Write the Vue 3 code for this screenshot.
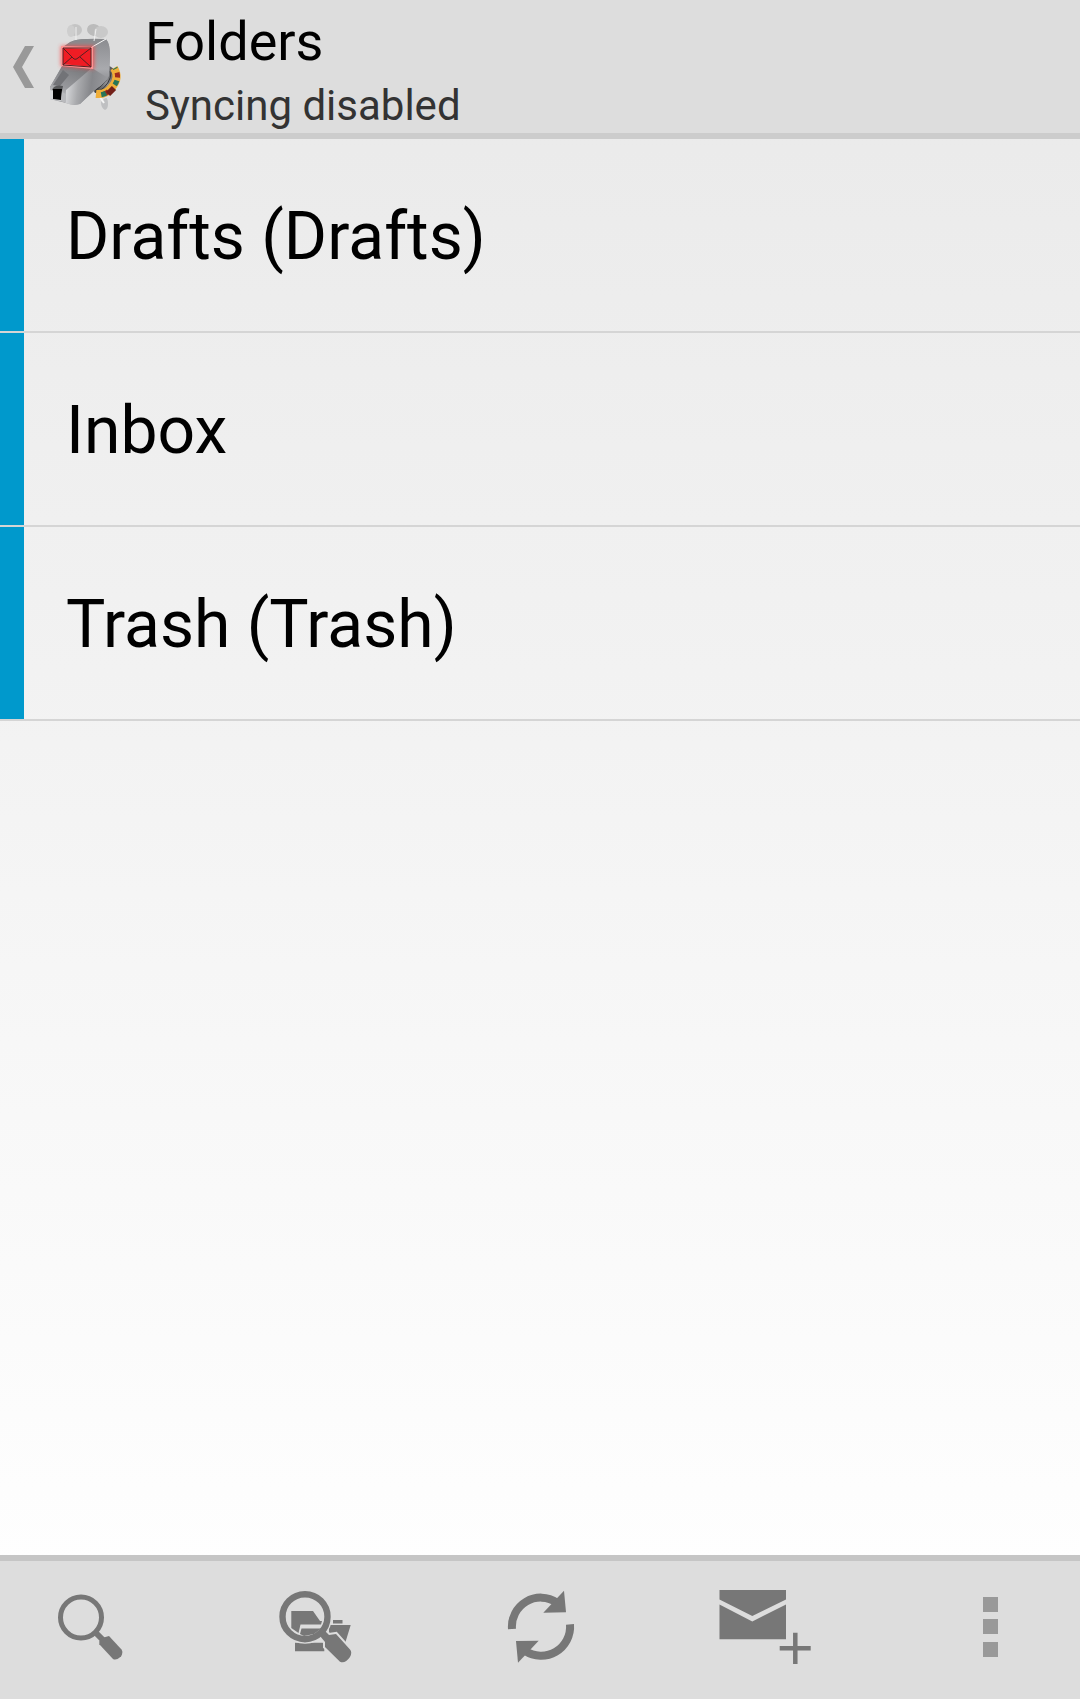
<script setup>
const folders = ['Drafts (Drafts)', 'Inbox', 'Trash (Trash)']
</script>

<template>
  <div class="screen">
    <header class="bar">
      <button class="up" type="button" aria-label="Back">
        <svg class="chevron" viewBox="0 0 22 42" aria-hidden="true">
          <path d="M0 21L12 0H21L9 21L21 42H12Z" fill="#999" />
        </svg>
        <svg class="logo" viewBox="0 2 90 100" aria-hidden="true">
          <defs>
            <linearGradient id="head" x1="0" y1="0" x2="1" y2="0.6">
              <stop offset="0" stop-color="#77787b" />
              <stop offset="0.5" stop-color="#8d8e92" />
              <stop offset="1" stop-color="#a0a1a5" />
            </linearGradient>
            <linearGradient id="side" x1="0" y1="0" x2="0" y2="1">
              <stop offset="0" stop-color="#8b8c90" />
              <stop offset="0.6" stop-color="#a9aaae" />
              <stop offset="1" stop-color="#7d7e82" />
            </linearGradient>
            <linearGradient id="snout" x1="0.7" y1="0" x2="0.2" y2="1">
              <stop offset="0" stop-color="#77787b" />
              <stop offset="0.6" stop-color="#97989c" />
              <stop offset="1" stop-color="#d4d5d7" />
            </linearGradient>
            <linearGradient id="cheek" x1="0" y1="0.5" x2="1" y2="0.6">
              <stop offset="0" stop-color="#dcdddf" />
              <stop offset="0.3" stop-color="#a9aaad" />
              <stop offset="0.6" stop-color="#86878b" />
              <stop offset="1" stop-color="#9a9b9f" />
            </linearGradient>
            <linearGradient id="neck" x1="0" y1="1" x2="1" y2="0">
              <stop offset="0" stop-color="#2c2d2f" />
              <stop offset="0.5" stop-color="#8f9094" />
              <stop offset="1" stop-color="#47484a" />
            </linearGradient>
            <filter id="glow" x="-30%" y="-40%" width="160%" height="180%">
              <feGaussianBlur stdDeviation="2" />
            </filter>
          </defs>
          <path d="M62 86Q68 79 68 89Q68 94 65 95Q61 93 61 87Z" fill="#bfc0c2" />
          <path d="M60 82L64 88" stroke="#f5f5f5" stroke-width="2" />
          <path d="M68 50L74 54Q76 68 65 76L55 78L52 72Z" fill="url(#neck)" />
          <path d="M69 56Q69 66 56 75M71 57Q71 69 58 77" fill="none" stroke="#37383a" />
          <path d="M74 53Q80 63 72 72Q66 80 56 79" fill="none" stroke="#f0ae38" stroke-width="8" />
          <path d="M75 53Q81 63 73 72Q66 81 56 80" fill="none" stroke="#a02c1e" stroke-width="5" stroke-dasharray="5 17" stroke-dashoffset="-5" />
          <path d="M75 53Q81 63 73 72Q66 81 56 80" fill="none" stroke="#277658" stroke-width="5" stroke-dasharray="5 12" stroke-dashoffset="-13" />
          <path d="M68 79L74 73" stroke="#732019" stroke-width="6" />
          <path d="M30 27Q36 24 46 24L65 24Q70 27 70 40L69 61Q66 67 57 73L40 89Q33 91 26 88L10 84L10 72L22 52L23 32Z" fill="url(#head)" />
          <path d="M52 32L66 24Q70 28 70 42L69 61Q64 69 55 74L50 54Z" fill="url(#side)" />
          <path d="M22 51L52 53L26 75L25 87L10 84L10 72Z" fill="url(#snout)" />
          <path d="M52 53L68 63Q64 69 56 74L40 89Q33 91 25 88L26 75Z" fill="url(#cheek)" />
          <path d="M23 55L29 60L20 71L13 70Z" fill="#727377" />
          <path d="M12 75Q14 69 23 71L22 76Z" fill="#57585a" />
          <path d="M13 74H22L21 85L13 84Z" fill="#000" />
          <path d="M10 75L13 76V84L10 83Z" fill="#d6d7d8" />
          <path d="M22 77L26 79V88L21 86Z" fill="#b9babd" />
          <path d="M23 33L33 26Q42 23 65 24L52 32Z" fill="#898a8d" />
          <path d="M52 32L66 24" stroke="#f7f7f7" />
          <path d="M21 31H54V54L21 51Z" fill="#ff4545" opacity="0.85" filter="url(#glow)" />
          <path d="M22 32L52 33V53L22 50Z" fill="#ef1c24" stroke="#ff9494" stroke-width="2" />
          <path d="M23 33H51V52L23 50ZM23 33L34 44Q36 45 38 43L51 33M23 50L32 42M51 52L40 42" fill="none" stroke="#552022" stroke-width="1" />
          <ellipse cx="35" cy="15" rx="7" ry="6" fill="#c4c4c4" />
          <ellipse cx="31" cy="16" rx="4" ry="6" fill="#cecece" />
          <ellipse cx="54" cy="15" rx="7" ry="6" fill="#bbb" transform="rotate(12 54 15)" />
          <ellipse cx="61" cy="17" rx="7" ry="6" fill="#c9c9c9" />
          <path d="M36 12V25M56 14L54 26" stroke="#f0f0f0" fill="none" />
        </svg>
      </button>
      <div class="titles">
        <h1>Folders</h1>
        <p>Syncing disabled</p>
      </div>
    </header>

    <main>
      <ul class="list">
        <li v-for="name in folders" :key="name">
          <a class="row" href="#">{{ name }}</a>
        </li>
      </ul>
    </main>

    <footer class="actions">
      <button type="button" aria-label="Search">
        <svg viewBox="0 0 96 96" aria-hidden="true">
          <circle cx="39" cy="35.5" r="20.5" fill="none" stroke="#777" stroke-width="5" />
          <path d="M53 50L62 59" stroke="#777" stroke-width="6" />
          <path d="M57.3 62.3V59L60 56L67 54L79.5 67.5Q81.5 70 79 74.5Q74 79 71 77Z" fill="#777" />
        </svg>
      </button>
      <button type="button" aria-label="Search folders">
        <svg viewBox="0 0 96 96" aria-hidden="true">
          <path d="M28 60.700H57.300V69.300H28ZM66 38H75.500V41.500H66ZM62 43H83.700L78.500 60L62 56Z" fill="#777" />
          <circle cx="38" cy="34.7" r="23.5" fill="#ddd" stroke="#ddd" stroke-width="7" />
          <path d="M24.300 29H46L53 39H55L54 42.500H33.500L31.500 51L24.300 46Z" fill="#777" />
          <path d="M34.500 46.500H54L47 52L37 54L33 52Z" fill="#777" />
          <path
            d="M53 54L58 49L62 53L69 52L83 67.500Q85.500 70 83 75Q78 82 73 79.700L58 65V60Z"
            fill="#777"
            stroke="#ddd"
            stroke-width="4"
            paint-order="stroke"
          />
          <circle cx="38" cy="34.7" r="22.5" fill="none" stroke="#777" stroke-width="6.4" />
        </svg>
      </button>
      <button type="button" aria-label="Refresh">
        <svg viewBox="0 0 96 96" aria-hidden="true">
          <g id="arrow">
            <path d="M20 47A29 29 0 0 1 65 20.500" fill="none" stroke="#777" stroke-width="8" />
            <path d="M72 8.700L74 30.300L51.300 30.700Z" fill="#777" />
          </g>
          <use href="#arrow" transform="rotate(180 49 44.7)" />
        </svg>
      </button>
      <button type="button" aria-label="Compose">
        <svg viewBox="0 0 96 96" aria-hidden="true">
          <path d="M2.500 8H69V17.500L35.300 34L2.500 17.500ZM2.500 22.500L35.300 39.500L69 22.500V57.300H2.500Z" fill="#777" />
          <path d="M62.700 66.300H93.700M78.300 50.700V82" stroke="#777" stroke-width="4.500" />
        </svg>
      </button>
      <button type="button" aria-label="More options">
        <svg viewBox="0 0 96 96" aria-hidden="true">
          <path d="M41 15h15v15h-15zM41 37h15v15h-15zM41 60h15v15h-15z" fill="#999" />
        </svg>
      </button>
    </footer>
  </div>
</template>

<style>
body {
  margin: 0;
}
</style>

<style scoped>
.screen {
  display: flex;
  flex-direction: column;
  min-height: 100vh;
  font-family: Roboto, "Liberation Sans", sans-serif;
  color: #000;
  background: linear-gradient(#e9e9e9, #fefefe 92%);
}

button {
  padding: 0;
  border: 0;
  background: none;
  cursor: pointer;
}

.bar {
  display: flex;
  align-items: center;
  gap: 15px;
  padding-left: 13px;
  background: #ddd;
  border-bottom: 6px solid #ccc;
}

.up {
  display: flex;
  align-items: center;
  gap: 5px;
}

.chevron {
  width: 22px;
  height: 42px;
}

.logo {
  width: 90px;
  height: 100px;
}

.titles {
  display: flex;
  flex-direction: column;
  gap: 7px;
  padding: 10px 0 2px;
}

h1,
p {
  margin: 0;
  font-weight: 400;
}

h1 {
  font-size: 54px;
  line-height: 64px;
}

p {
  font-size: 42px;
  line-height: 50px;
  color: #333;
}

main {
  flex: 1;
}

.list {
  margin: 0;
  padding: 0;
  list-style: none;
}

.list li {
  border-bottom: 2px solid #d5d5d5;
}

.row {
  display: flex;
  box-sizing: border-box;
  align-items: center;
  min-height: 192px;
  padding: 3px 0 0 42px;
  border-left: 24px solid #09c;
  font-size: 66px;
  line-height: 78px;
  color: inherit;
  text-decoration: none;
}

.actions {
  display: flex;
  justify-content: space-between;
  background: #ddd;
  border-top: 6px solid #c5c5c5;
}

.actions button {
  display: flex;
  flex: 0 1 180px;
  align-items: center;
  justify-content: center;
  height: 138px;
}

.actions svg {
  width: 96px;
  height: 96px;
}
</style>
